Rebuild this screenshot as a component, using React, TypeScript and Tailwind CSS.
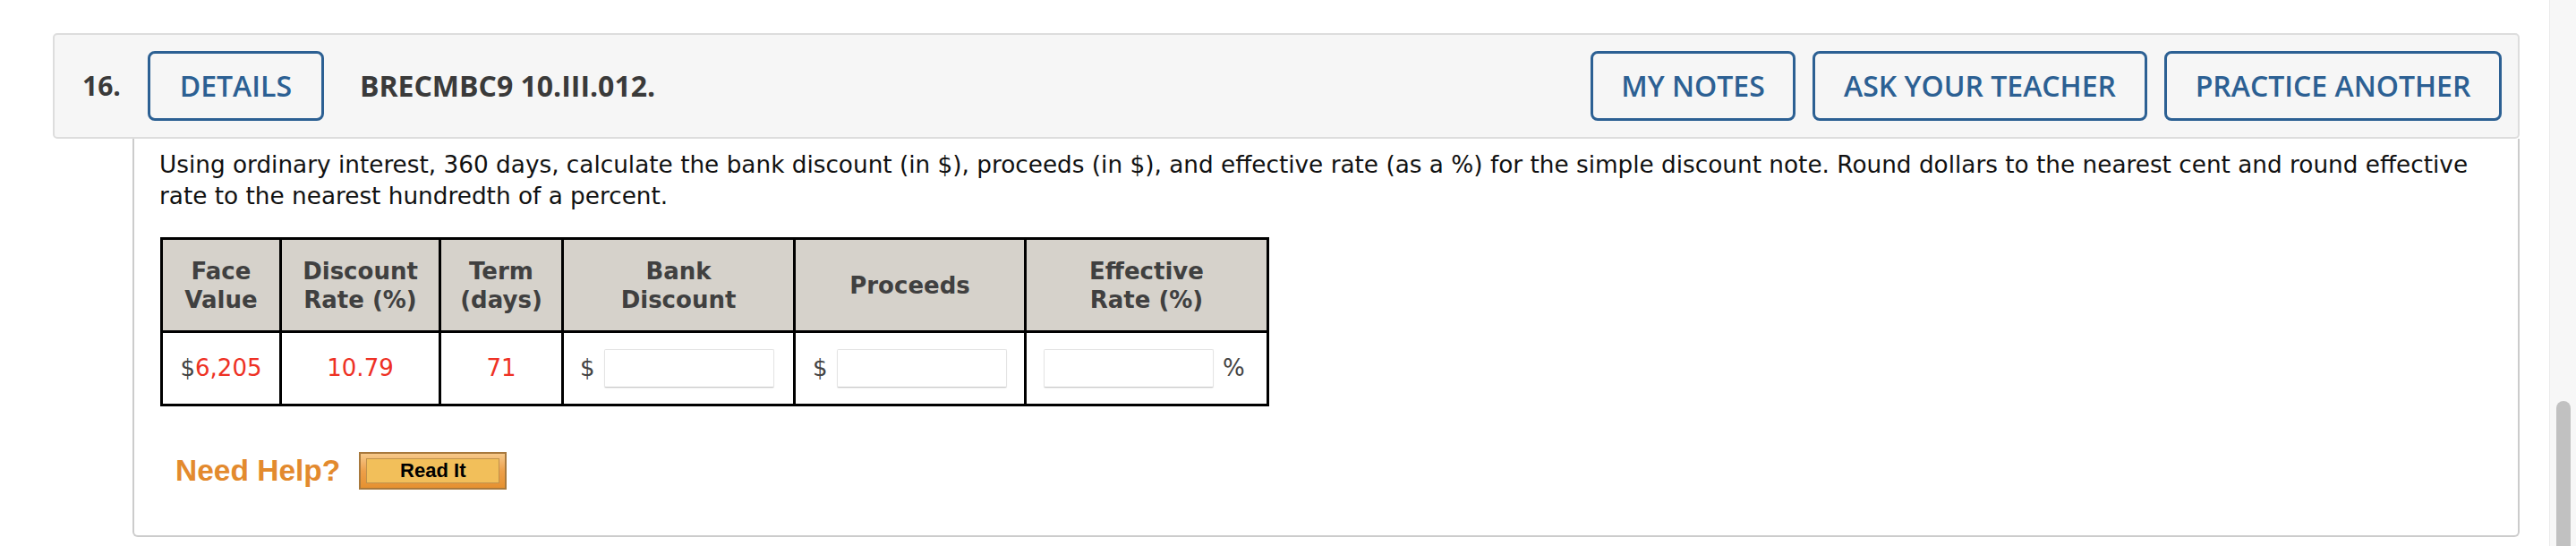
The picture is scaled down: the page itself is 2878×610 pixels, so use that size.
import React from "react";

const openSans = { fontFamily: '"Open Sans", "Noto Sans", sans-serif' };
const verdana = { fontFamily: '"DejaVu Sans", Verdana, sans-serif' };

function AnswerInput() {
  return (
    <input
      type="text"
      className="w-[190px] h-[43px] bg-white border border-[#e4e4e4] border-b-[#c9c9c9] rounded-[2px] shadow-[0_1px_1px_rgba(0,0,0,0.08)] outline-none"
    />
  );
}

export default function App() {
  const headerCell =
    "bg-[#d6d2cb] border-[3px] border-black text-[#404040] font-bold text-[26px] leading-[32px] text-center align-middle";
  const bodyCell = "border-[3px] border-black text-[26px] align-middle";
  const navBtn =
    "h-[78px] border-[3px] border-[#2c6093] rounded-[8px] text-[#2c6093] text-[32px] font-semibold flex items-center justify-center leading-none";
  return (
    <div className="flex w-[2878px] h-[610px] bg-white overflow-hidden">
      <div className="flex-1 flex flex-col pt-[37px] pl-[59px] pr-[33px]">
        <div
          className="h-[118px] shrink-0 border-2 border-[#dddddd] bg-[#f6f6f6] rounded-[5px] flex items-center pl-[31px] pr-[18px]"
          style={openSans}
        >
          <span className="text-[30px] font-bold text-[#3a3a3a] leading-none">16.</span>
          <button className={navBtn + " ml-[30px] w-[197px]"}>DETAILS</button>
          <span className="ml-[40px] text-[32px] font-bold text-[#3a3a3a] leading-none">
            BRECMBC9 10.III.012.
          </span>
          <div className="ml-auto flex gap-[19px]">
            <button className={navBtn + " w-[229px]"}>MY NOTES</button>
            <button className={navBtn + " w-[374px]"}>ASK YOUR TEACHER</button>
            <button className={navBtn + " w-[377px]"}>PRACTICE ANOTHER</button>
          </div>
        </div>

        <div
          className="ml-[89px] h-[445px] shrink-0 border-x-2 border-b-2 border-[#cccccc] rounded-b-[6px] pl-[28px] pt-[12px]"
          style={verdana}
        >
          <div className="text-[26.3px] leading-[35px] text-[#111111]">
            <div className="whitespace-nowrap">
              Using ordinary interest, 360 days, calculate the bank discount (in $), proceeds (in $), and effective rate (as a %) for the simple discount note. Round dollars to the nearest cent and round effective
            </div>
            <div className="whitespace-nowrap">rate to the nearest hundredth of a percent.</div>
          </div>

          <table className="mt-[28px] ml-[1px] border-collapse table-fixed w-[1236px]">
            <colgroup>
              <col className="w-[133px]" />
              <col className="w-[178px]" />
              <col className="w-[137px]" />
              <col className="w-[259px]" />
              <col className="w-[258px]" />
              <col className="w-[271px]" />
            </colgroup>
            <thead>
              <tr className="h-[104px]">
                <th className={headerCell}>
                  Face
                  <br />
                  Value
                </th>
                <th className={headerCell}>
                  Discount
                  <br />
                  Rate (%)
                </th>
                <th className={headerCell}>
                  Term
                  <br />
                  (days)
                </th>
                <th className={headerCell}>
                  Bank
                  <br />
                  Discount
                </th>
                <th className={headerCell}>Proceeds</th>
                <th className={headerCell}>
                  Effective
                  <br />
                  Rate (%)
                </th>
              </tr>
            </thead>
            <tbody>
              <tr className="h-[82px]">
                <td className={bodyCell + " text-center"}>
                  <span className="text-[#444444]">$</span>
                  <span className="text-[#ee3124]">6,205</span>
                </td>
                <td className={bodyCell + " text-center text-[#ee3124]"}>10.79</td>
                <td className={bodyCell + " text-center text-[#ee3124]"}>71</td>
                <td className={bodyCell}>
                  <div className="flex items-center gap-[10px] pl-[18px] text-[#444444]">
                    <span>$</span>
                    <AnswerInput />
                  </div>
                </td>
                <td className={bodyCell}>
                  <div className="flex items-center gap-[10px] pl-[19px] text-[#444444]">
                    <span>$</span>
                    <AnswerInput />
                  </div>
                </td>
                <td className={bodyCell}>
                  <div className="flex items-center gap-[10px] pl-[19px] text-[#444444]">
                    <AnswerInput />
                    <span>%</span>
                  </div>
                </td>
              </tr>
            </tbody>
          </table>

          <div className="mt-[51px] flex items-center pl-[18px]">
            <span
              className="text-[33.5px] font-bold text-[#e38a2e] leading-none"
              style={{ fontFamily: '"Liberation Sans", Arial, sans-serif' }}
            >
              Need Help?
            </span>
            <div className="ml-[21px] w-[165px] h-[42px] border-2 border-[#a8793d] bg-gradient-to-b from-[#f6c98a] via-[#eda04a] to-[#e6912f] px-[6px] py-[5px]">
              <div
                className="w-full h-full border border-[#c0924c] bg-[#f2bf5a] flex items-center justify-center text-[22px] font-bold text-black leading-none"
                style={{ fontFamily: '"Liberation Sans", Arial, sans-serif' }}
              >
                Read It
              </div>
            </div>
          </div>
        </div>
      </div>

      <div className="w-[30px] h-full bg-[#f7f7f7] border-l border-[#ebebeb] pl-[7px]">
        <div className="mt-[448px] w-[16px] h-[175px] rounded-full bg-[#c1c1c1]" />
      </div>
    </div>
  );
}
